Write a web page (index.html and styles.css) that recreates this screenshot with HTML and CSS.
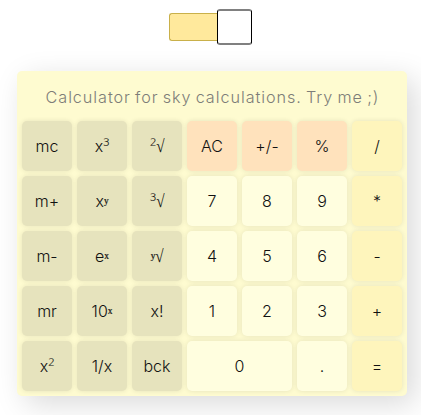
FILE: index.html
```
<!DOCTYPE html>
<html lang="en">
<head>
<meta charset="utf-8">
<title>Calculator</title>
<link rel="stylesheet" href="styles.css">
</head>
<body>
<div class="toggle"><div class="track"></div><div class="thumb"></div></div>
<main class="calculator">
<div class="display"><span class="message">Calculator for sky calculations. Try me ;)</span></div>
<button class="fn">mc</button><button class="fn"><span>x<i class="num">³</i></span></button><button class="fn"><span><i class="num">²</i><i class="root">√</i></span></button><button class="top">AC</button><button class="top">+/-</button><button class="top">%</button><button class="op">/</button>
<button class="fn">m+</button><button class="fn"><span>x<i class="sup">ʸ</i></span></button><button class="fn"><span><i class="num">³</i><i class="root">√</i></span></button><button>7</button><button>8</button><button>9</button><button class="op">*</button>
<button class="fn">m-</button><button class="fn"><span>e<i class="sup">ˣ</i></span></button><button class="fn"><span><i class="sup">ʸ</i><i class="root">√</i></span></button><button>4</button><button>5</button><button>6</button><button class="op">-</button>
<button class="fn">mr</button><button class="fn"><span>10<i class="sup">ˣ</i></span></button><button class="fn">x!</button><button>1</button><button>2</button><button>3</button><button class="op">+</button>
<button class="fn"><span>x<i class="num">²</i></span></button><button class="fn">1/x</button><button class="fn">bck</button><button class="zero">0</button><button>.</button><button class="op">=</button>
</main>
</body>
</html>
```
FILE: styles.css
```
* { box-sizing: border-box; }
body {
  margin: 0;
  padding: 9px 0 0 17px;
  height: 415px;
  overflow: hidden;
  background: #fff;
  font-family: Inter, "Liberation Sans", sans-serif;
  font-weight: 300;
}
.toggle {
  display: flex;
  align-items: center;
  height: 36px;
  margin: 0 0 26px 152px;
}
.track {
  width: 50px;
  height: 28px;
  border: 1px solid #c9b04a;
  border-right: 0;
  border-radius: 3px 0 0 3px;
  background: #ffe99c;
}
.thumb {
  width: 35px;
  height: 36px;
  margin-left: -2px;
  border: 1px solid #000;
  border-top: 2px solid #808080;
  border-bottom: 2px solid #808080;
  border-radius: 3px;
  background: #fff;
}
.calculator {
  display: grid;
  grid-template-columns: repeat(7, 50px);
  grid-template-rows: 40px repeat(5, 50px);
  gap: 5px;
  width: 390px;
  height: 325px;
  padding: 5px;
  border-radius: 5px;
  background: #fefbd0;
  box-shadow: 8px 8px 30px rgba(0, 0, 0, .15);
}
.display {
  grid-column: 1 / -1;
  display: flex;
  align-items: center;
  justify-content: center;
  padding: 1px 0 0 1px;
  color: #7d7d78;
  font-size: 16.2px;
  letter-spacing: .95px;
  word-spacing: -1.3px;
  white-space: nowrap;
}
button {
  display: flex;
  align-items: center;
  justify-content: center;
  padding: 0;
  border: 0;
  border-radius: 5px;
  background: #fffedf;
  box-shadow: 0 0 5px rgba(0, 0, 0, .1);
  color: #111;
  font: inherit;
  font-size: 16px;
}
.fn { background: #e6e3bd; }
.top { background: #ffe2bc; }
.op { background: #fef5bc; }
.zero { grid-column: span 2; }
.num, .sup, .root {
  display: inline-block;
  font-style: normal;
}
.num {
  font-family: "Open Sans", sans-serif;
  font-size: 18px;
  font-weight: 300;
  line-height: 16px;
  transform: translateY(1px);
}
.sup, .root {
  font-family: "Liberation Serif", serif;
  font-weight: 400;
  line-height: 1;
}
.sup { -webkit-text-stroke: .2px #111; transform: translateY(1px); }
.root { margin-right: -1px; transform: scale(.95, 1.1); }
```
